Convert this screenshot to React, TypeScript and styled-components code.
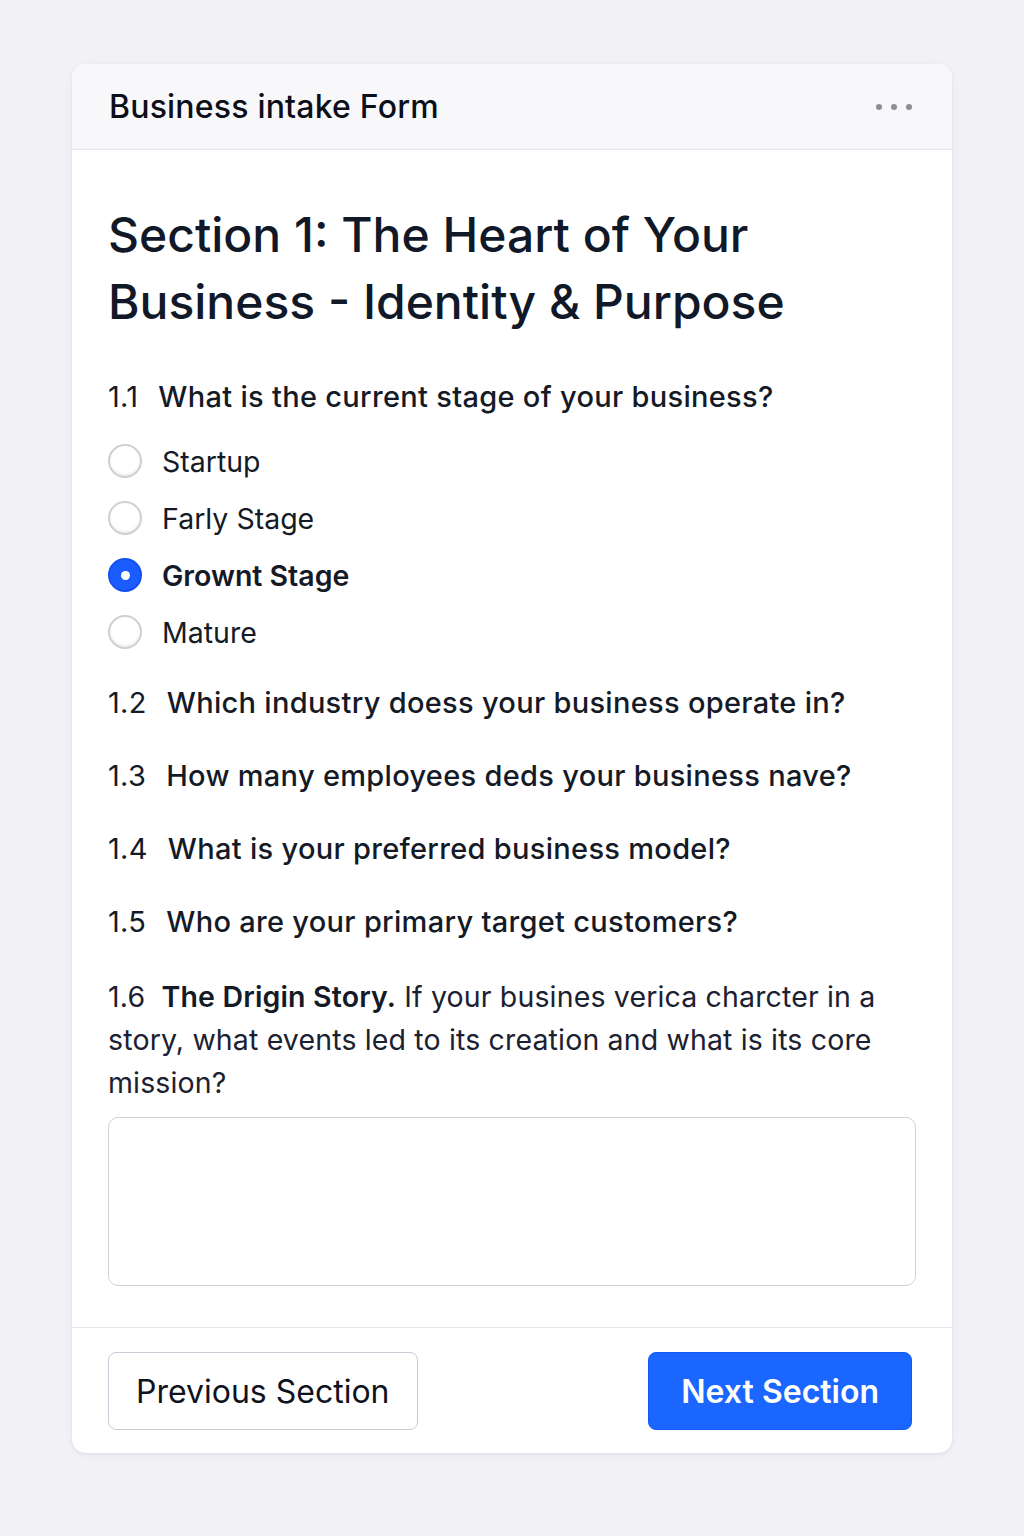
import styled, { createGlobalStyle } from "styled-components";

const GlobalStyle = createGlobalStyle`
  body {
    margin: 0;
    background: #f2f2f6;
    font-family: Inter, "Noto Sans", "Liberation Sans", sans-serif;
    color: #0f1626;
  }
`;

const Page = styled.div`
  min-height: 1536px;
  padding: 64px 72px 0;
  box-sizing: border-box;
`;

const Card = styled.div`
  background: #ffffff;
  border-radius: 14px;
  box-shadow: 0 1px 3px rgba(20, 20, 40, 0.08), 0 2px 10px rgba(20, 20, 40, 0.04);
  overflow: hidden;
`;

const Header = styled.div`
  height: 86px;
  display: flex;
  align-items: center;
  justify-content: space-between;
  padding: 0 36px 0 37px;
  background: #f8f8fa;
  border-bottom: 1.5px solid #e4e4ea;
  box-sizing: border-box;
`;

const HeaderTitle = styled.h1`
  margin: 0;
  font-size: 32px;
  font-weight: 500;
  letter-spacing: 0.2px;
  color: #0b0f1a;
`;

const Dots = styled.div`
  display: flex;
  gap: 9px;
  padding-right: 4px;
`;

const Dot = styled.span`
  width: 6px;
  height: 6px;
  border-radius: 50%;
  background: #8d8d98;
`;

const Body = styled.div`
  padding: 51px 36px 41px;
`;

const SectionTitle = styled.h2`
  margin: 0 0 42px;
  font-size: 48px;
  line-height: 67px;
  font-weight: 500;
  color: #111827;
`;

const Question = styled.div<{ $gap?: number }>`
  font-size: 29px;
  line-height: 40px;
  font-weight: 500;
  letter-spacing: 0.3px;
  color: #141a26;
  margin-bottom: ${(p) => p.$gap ?? 33}px;
`;

const Num = styled.span`
  font-weight: 400;
  margin-right: 20px;
`;

const Options = styled.div`
  display: flex;
  flex-direction: column;
  gap: 17px;
  margin: 3px 0 31px;
`;

const Option = styled.label<{ $checked?: boolean }>`
  display: flex;
  align-items: center;
  gap: 20px;
  height: 40px;
  font-size: 28.5px;
  font-weight: ${(p) => (p.$checked ? 600 : 400)};
  color: #141a26;
`;

const Radio = styled.span<{ $checked?: boolean }>`
  width: 34px;
  height: 34px;
  border-radius: 50%;
  box-sizing: border-box;
  display: flex;
  align-items: center;
  justify-content: center;
  flex-shrink: 0;
  background: ${(p) => (p.$checked ? "#1a5cff" : "#ffffff")};
  border: 2px solid ${(p) => (p.$checked ? "#1450f0" : "#cfcfd4")};
  box-shadow: ${(p) =>
    p.$checked ? "none" : "inset 0 -2px 2px rgba(0,0,0,0.06)"};

  &::after {
    content: "";
    width: 9px;
    height: 9px;
    border-radius: 50%;
    background: #ffffff;
    display: ${(p) => (p.$checked ? "block" : "none")};
  }
`;

const Story = styled.p`
  margin: 0 0 13px;
  font-size: 28.5px;
  line-height: 43px;
  font-weight: 400;
  letter-spacing: 0.15px;
  color: #1b2130;
`;

const Bold = styled.span`
  font-weight: 600;
  color: #141a26;
`;

const TextArea = styled.textarea`
  display: block;
  width: 100%;
  height: 169px;
  box-sizing: border-box;
  border: 1.5px solid #cfd0d8;
  border-radius: 10px;
  resize: none;
  font: inherit;
  outline: none;
`;

const Footer = styled.div`
  border-top: 1.5px solid #e6e6ec;
  padding: 24px 40px 23px 36px;
  display: flex;
  justify-content: space-between;
  align-items: center;
`;

const Button = styled.button<{ $primary?: boolean }>`
  height: 78px;
  padding: 0 ${(p) => (p.$primary ? 32 : 27)}px;
  border-radius: 8px;
  font-family: inherit;
  font-size: 32px;
  font-weight: ${(p) => (p.$primary ? 600 : 400)};
  color: ${(p) => (p.$primary ? "#ffffff" : "#0f131d")};
  background: ${(p) => (p.$primary ? "#1a66ff" : "#ffffff")};
  border: 1.5px solid ${(p) => (p.$primary ? "#1458f5" : "#cbcbd8")};
  cursor: pointer;
`;

const options = [
  { label: "Startup", checked: false },
  { label: "Farly Stage", checked: false },
  { label: "Grownt Stage", checked: true },
  { label: "Mature", checked: false },
];

const questions = [
  { n: "1.2", text: "Which industry doess your business operate in?" },
  { n: "1.3", text: "How many employees deds your business nave?" },
  { n: "1.4", text: "What is your preferred business model?" },
  { n: "1.5", text: "Who are your primary target customers?" },
];

export default function App() {
  return (
    <>
      <GlobalStyle />
      <Page>
        <Card>
          <Header>
            <HeaderTitle>Business intake Form</HeaderTitle>
            <Dots>
              <Dot />
              <Dot />
              <Dot />
            </Dots>
          </Header>
          <Body>
            <SectionTitle>
              Section 1: The Heart of Your
              <br />
              Business - Identity &amp; Purpose
            </SectionTitle>
            <Question $gap={24}>
              <Num>1.1</Num>What is the current stage of your business?
            </Question>
            <Options>
              {options.map((o) => (
                <Option key={o.label} $checked={o.checked}>
                  <Radio $checked={o.checked} />
                  {o.label}
                </Option>
              ))}
            </Options>
            {questions.map((q) => (
              <Question key={q.n}>
                <Num>{q.n}</Num>
                {q.text}
              </Question>
            ))}
            <Story>
              1.6&nbsp;&nbsp;<Bold>The Drigin Story.</Bold> If your busines
              verica charcter in a story, what events led to its creation and
              what is its core mission?
            </Story>
            <TextArea />
          </Body>
          <Footer>
            <Button>Previous Section</Button>
            <Button $primary>Next Section</Button>
          </Footer>
        </Card>
      </Page>
    </>
  );
}
